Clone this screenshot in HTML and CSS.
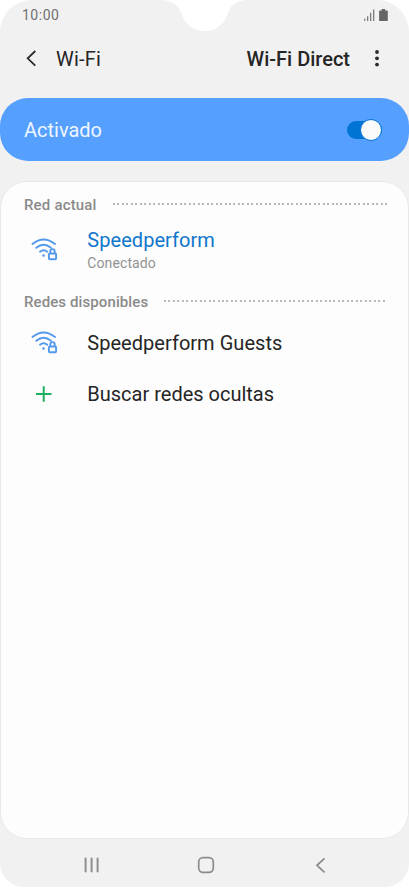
FILE: index.html
```
<!DOCTYPE html>
<html lang="es">
<head>
<meta charset="utf-8">
<title>Wi-Fi</title>
<link rel="stylesheet" href="styles.css">
</head>
<body>
<svg class="defs" width="0" height="0" aria-hidden="true">
  <symbol id="wifi-lock" viewBox="0 0 28 26">
    <g fill="none" stroke="#5499ec" stroke-width="1.9" stroke-linecap="round">
      <path d="M2.500 7Q13.500-2.100 25 7"/>
      <path d="M6.300 10.800Q13.500 4.700 21 10.800"/>
      <path d="M10 14.700Q13.500 11.700 17.300 14.700"/>
      <rect x="18.900" y="16.500" width="7.200" height="5.800" rx=".8"/>
      <path d="M20.300 16.200V14.300a2.200 2.200 0 0 1 4.400 0V16.200"/>
    </g>
    <circle cx="13.500" cy="18.500" r="1.300" fill="#5499ec"/>
  </symbol>
</svg>
<div class="screen">
  <svg class="notch" width="82" height="32" viewBox="0 0 82 32"><path d="M0 0C8 1 15 4 18 13C22 25 31 31 41.500 31S61 25 65 13C68 4 75 1 82 0Z" fill="#fff"/></svg>
  <div class="status">
    <span class="time">10:00</span>
    <svg width="25" height="13" viewBox="0 0 25 13" fill="#666"><path d="M.2 9.500h1.200V12H.2zM3 7.200h1.300V12H3zM6 3.800h1.300V12H6zM9 .5h1.300V12H9z" opacity=".85"/><path d="M15.700 1.500h2V0h3.400v1.500h2.100q.6 0 .6.600v9.300q0 .6-.6.600h-7.500q-.6 0-.6-.6V2.100q0-.6.600-.6z"/></svg>
  </div>
  <header class="bar">
    <svg class="back" width="12" height="18" viewBox="0 0 12 18"><path d="M10.300 1L2.700 8.300l7.600 7.300" fill="none" stroke="#2b2b2b" stroke-width="1.800"/></svg>
    <h1 class="title">Wi-Fi</h1>
    <span class="direct">Wi-Fi Direct</span>
    <svg class="more" width="6" height="18" viewBox="0 0 6 18" fill="#2b2b2b"><circle cx="3" cy="2" r="1.900"/><circle cx="3" cy="8.300" r="1.900"/><circle cx="3" cy="14.600" r="1.900"/></svg>
  </header>
  <section class="banner">
    <span class="state">Activado</span>
    <span class="switch"><span class="knob"></span></span>
  </section>
  <main class="card">
    <div class="section"><h2 class="label label-current">Red actual</h2><span class="dots"></span></div>
    <div class="row row-current">
      <svg class="icon" width="28" height="26"><use href="#wifi-lock"/></svg>
      <div class="details"><p class="name name-active">Speedperform</p><p class="sub">Conectado</p></div>
    </div>
    <div class="section section-available"><h2 class="label label-available">Redes disponibles</h2><span class="dots"></span></div>
    <div class="row row-guest">
      <svg class="icon" width="28" height="26"><use href="#wifi-lock"/></svg>
      <p class="name name-guest">Speedperform Guests</p>
    </div>
    <div class="row row-hidden">
      <svg class="icon" width="28" height="26" viewBox="0 0 28 26"><path d="M6 13h15.500M13.700 5.300v15.500" stroke="#1cb05c" stroke-width="2"/></svg>
      <p class="name name-hidden">Buscar redes ocultas</p>
    </div>
  </main>
  <nav class="nav">
    <svg width="16" height="16" viewBox="0 0 16 16"><path d="M1.600 1.500v13M7.600 1.500v13M13.600 1.500v13" stroke="#8f8f8f" stroke-width="2" stroke-linecap="round"/></svg>
    <svg class="home" width="18" height="18" viewBox="0 0 18 18"><rect x="1.700" y="1.700" width="14.600" height="14.600" rx="4.300" fill="none" stroke="#8b8b8b" stroke-width="1.700"/></svg>
    <svg width="12" height="16" viewBox="0 0 12 16"><path d="M9.500 1.300L2 8.300l7.500 7" fill="none" stroke="#8b8b8b" stroke-width="1.800"/></svg>
  </nav>
</div>
</body>
</html>
```
FILE: styles.css
```
* { box-sizing: border-box; }
body { margin: 0; background: #fff; font-family: Roboto, "Liberation Sans", sans-serif; }
h1, h2, p { margin: 0; font-weight: 400; }
svg { display: block; flex: none; }
.defs { position: absolute; }
.screen {
  position: relative;
  display: flex;
  flex-direction: column;
  width: 409px;
  height: 887.4px;
  background: #f1f1f1;
  border-radius: 32px 32px 24px 24px;
  overflow: hidden;
}
.notch { position: absolute; left: 163px; top: 0; }
.status {
  display: flex;
  justify-content: space-between;
  height: 30px;
  padding: 9px 20px 0 22px;
}
.time { font-size: 14px; line-height: 13px; letter-spacing: 0.5px; color: #707070; }
.bar { display: flex; align-items: center; height: 68px; padding: 0 29px 10px 25px; color: #252525; }
.title { margin-left: 19px; font-size: 20px; line-height: 24px; letter-spacing: 0.2px; }
.direct { margin-left: auto; font-size: 20px; line-height: 24px; font-weight: 500; }
.more { margin-left: 24px; }
.banner {
  display: flex;
  align-items: center;
  justify-content: space-between;
  height: 63.4px;
  flex: none;
  padding: 0 27px 0 24px;
  border-radius: 28px;
  background: #559fff;
}
.state { font-size: 20px; line-height: 24px; color: #eef6ff; }
.switch {
  display: flex;
  justify-content: flex-end;
  align-items: center;
  width: 35px;
  height: 18px;
  border-radius: 9px;
  background: #0074d4;
}
.knob { width: 22px; height: 22px; flex: none; border: 1px solid #0074d4; border-radius: 50%; background: #fafafa; }
.card {
  flex: 1;
  margin-top: 20px;
  border: 1px solid #e8e8e8;
  border-radius: 27px;
  background: #fdfdfd;
}
.section { display: flex; align-items: center; padding: 12.5px 19px 0 23px; height: 32px; }
.label { font-size: 15px; line-height: 18px; font-weight: 500; color: #8a8a8a; }
.label-current { letter-spacing: 0.18px; }
.label-available { letter-spacing: 0.1px; }
.dots {
  flex: 1;
  height: 2px;
  margin: 0 0 2px 16px;
  background: repeating-linear-gradient(90deg, #b8b8b8 0 2px, transparent 2px 4.46px);
}
.row { display: flex; align-items: center; padding-left: 29px; }
.row-current { height: 66px; padding-top: 5px; }
.details { padding-top: 4px; }
.icon { margin-right: 29.3px; }
.name { font-size: 20px; line-height: 24px; color: #252525; }
.name-active { color: #0f76cc; letter-spacing: 0.05px; }
.name-guest { letter-spacing: 0.03px; }
.sub { font-size: 14px; line-height: 23px; letter-spacing: 0.1px; color: #929292; }
.section-available { height: 30px; padding-right: 21px; }
.row-guest { height: 65px; }
.row-hidden { height: 37px; }
.nav { display: flex; align-items: center; justify-content: space-between; height: 48px; padding: 4px 82px 0 84px; }
.home { margin-right: 4px; }
```
